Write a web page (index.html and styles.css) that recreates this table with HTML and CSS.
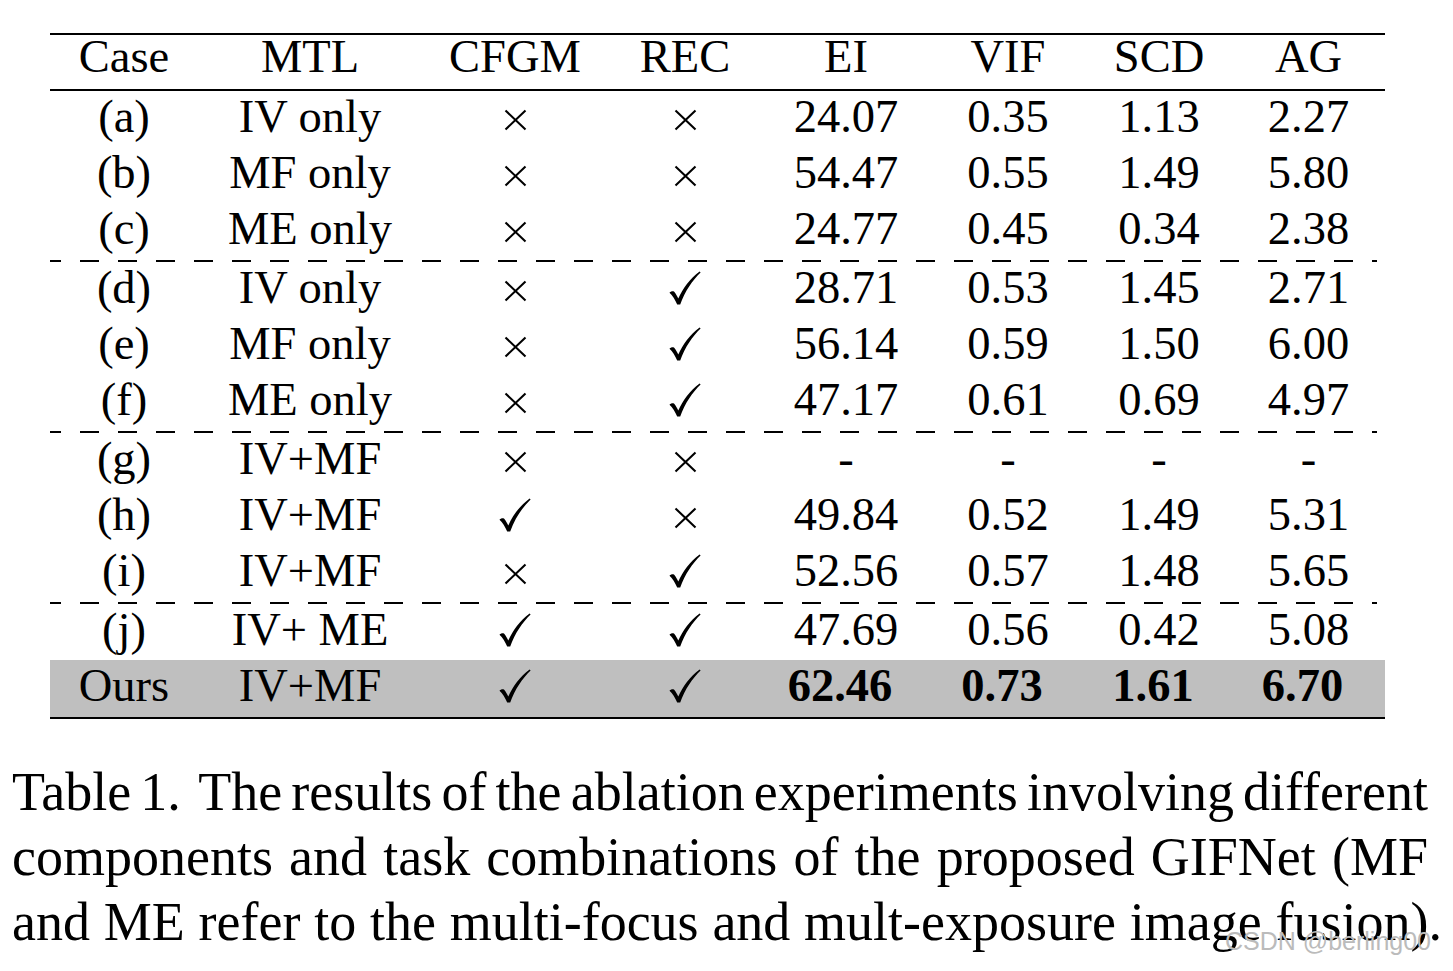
FILE: index.html
```html
<!DOCTYPE html>
<html>
<head>
<meta charset="utf-8">
<link rel="stylesheet" href="styles.css">
</head>
<body>
<div class="page">
  <div class="table">
    <div class="row head">
      <div class="cell">Case</div><div class="cell">MTL</div><div class="cell">CFGM</div><div class="cell">REC</div>
      <div class="cell">EI</div><div class="cell">VIF</div><div class="cell">SCD</div><div class="cell">AG</div>
    </div>

    <div class="row">
      <div class="cell">(a)</div><div class="cell">IV only</div>
      <div class="cell"><svg class="x" viewBox="0 0 23 22"><path d="M1.5 1.5L21.5 20.5M21.5 1.5L1.5 20.5"/></svg></div>
      <div class="cell"><svg class="x" viewBox="0 0 23 22"><path d="M1.5 1.5L21.5 20.5M21.5 1.5L1.5 20.5"/></svg></div>
      <div class="cell">24.07</div><div class="cell">0.35</div><div class="cell">1.13</div><div class="cell">2.27</div>
    </div>
    <div class="row">
      <div class="cell">(b)</div><div class="cell">MF only</div>
      <div class="cell"><svg class="x" viewBox="0 0 23 22"><path d="M1.5 1.5L21.5 20.5M21.5 1.5L1.5 20.5"/></svg></div>
      <div class="cell"><svg class="x" viewBox="0 0 23 22"><path d="M1.5 1.5L21.5 20.5M21.5 1.5L1.5 20.5"/></svg></div>
      <div class="cell">54.47</div><div class="cell">0.55</div><div class="cell">1.49</div><div class="cell">5.80</div>
    </div>
    <div class="row">
      <div class="cell">(c)</div><div class="cell">ME only</div>
      <div class="cell"><svg class="x" viewBox="0 0 23 22"><path d="M1.5 1.5L21.5 20.5M21.5 1.5L1.5 20.5"/></svg></div>
      <div class="cell"><svg class="x" viewBox="0 0 23 22"><path d="M1.5 1.5L21.5 20.5M21.5 1.5L1.5 20.5"/></svg></div>
      <div class="cell">24.77</div><div class="cell">0.45</div><div class="cell">0.34</div><div class="cell">2.38</div>
    </div>

    <div class="dash"></div>

    <div class="row">
      <div class="cell">(d)</div><div class="cell">IV only</div>
      <div class="cell"><svg class="x" viewBox="0 0 23 22"><path d="M1.5 1.5L21.5 20.5M21.5 1.5L1.5 20.5"/></svg></div>
      <div class="cell"><svg class="chk" viewBox="0 0 32 34"><path d="M0.5 21.8C1.8 20.4 3.8 19.8 5.2 20.8C6.5 22.4 8 25 9.3 27.5C14 17 21 7.5 30.6 0.4L31.6 1.4C23.5 9.2 16 20 11.2 33.6L8.2 33.6C6 28.5 3.5 24.5 0.5 21.8Z"/></svg></div>
      <div class="cell">28.71</div><div class="cell">0.53</div><div class="cell">1.45</div><div class="cell">2.71</div>
    </div>
    <div class="row">
      <div class="cell">(e)</div><div class="cell">MF only</div>
      <div class="cell"><svg class="x" viewBox="0 0 23 22"><path d="M1.5 1.5L21.5 20.5M21.5 1.5L1.5 20.5"/></svg></div>
      <div class="cell"><svg class="chk" viewBox="0 0 32 34"><path d="M0.5 21.8C1.8 20.4 3.8 19.8 5.2 20.8C6.5 22.4 8 25 9.3 27.5C14 17 21 7.5 30.6 0.4L31.6 1.4C23.5 9.2 16 20 11.2 33.6L8.2 33.6C6 28.5 3.5 24.5 0.5 21.8Z"/></svg></div>
      <div class="cell">56.14</div><div class="cell">0.59</div><div class="cell">1.50</div><div class="cell">6.00</div>
    </div>
    <div class="row">
      <div class="cell">(f)</div><div class="cell">ME only</div>
      <div class="cell"><svg class="x" viewBox="0 0 23 22"><path d="M1.5 1.5L21.5 20.5M21.5 1.5L1.5 20.5"/></svg></div>
      <div class="cell"><svg class="chk" viewBox="0 0 32 34"><path d="M0.5 21.8C1.8 20.4 3.8 19.8 5.2 20.8C6.5 22.4 8 25 9.3 27.5C14 17 21 7.5 30.6 0.4L31.6 1.4C23.5 9.2 16 20 11.2 33.6L8.2 33.6C6 28.5 3.5 24.5 0.5 21.8Z"/></svg></div>
      <div class="cell">47.17</div><div class="cell">0.61</div><div class="cell">0.69</div><div class="cell">4.97</div>
    </div>

    <div class="dash"></div>

    <div class="row">
      <div class="cell">(g)</div><div class="cell">IV+MF</div>
      <div class="cell"><svg class="x" viewBox="0 0 23 22"><path d="M1.5 1.5L21.5 20.5M21.5 1.5L1.5 20.5"/></svg></div>
      <div class="cell"><svg class="x" viewBox="0 0 23 22"><path d="M1.5 1.5L21.5 20.5M21.5 1.5L1.5 20.5"/></svg></div>
      <div class="cell">-</div><div class="cell">-</div><div class="cell">-</div><div class="cell">-</div>
    </div>
    <div class="row">
      <div class="cell">(h)</div><div class="cell">IV+MF</div>
      <div class="cell"><svg class="chk" viewBox="0 0 32 34"><path d="M0.5 21.8C1.8 20.4 3.8 19.8 5.2 20.8C6.5 22.4 8 25 9.3 27.5C14 17 21 7.5 30.6 0.4L31.6 1.4C23.5 9.2 16 20 11.2 33.6L8.2 33.6C6 28.5 3.5 24.5 0.5 21.8Z"/></svg></div>
      <div class="cell"><svg class="x" viewBox="0 0 23 22"><path d="M1.5 1.5L21.5 20.5M21.5 1.5L1.5 20.5"/></svg></div>
      <div class="cell">49.84</div><div class="cell">0.52</div><div class="cell">1.49</div><div class="cell">5.31</div>
    </div>
    <div class="row">
      <div class="cell">(i)</div><div class="cell">IV+MF</div>
      <div class="cell"><svg class="x" viewBox="0 0 23 22"><path d="M1.5 1.5L21.5 20.5M21.5 1.5L1.5 20.5"/></svg></div>
      <div class="cell"><svg class="chk" viewBox="0 0 32 34"><path d="M0.5 21.8C1.8 20.4 3.8 19.8 5.2 20.8C6.5 22.4 8 25 9.3 27.5C14 17 21 7.5 30.6 0.4L31.6 1.4C23.5 9.2 16 20 11.2 33.6L8.2 33.6C6 28.5 3.5 24.5 0.5 21.8Z"/></svg></div>
      <div class="cell">52.56</div><div class="cell">0.57</div><div class="cell">1.48</div><div class="cell">5.65</div>
    </div>

    <div class="dash"></div>

    <div class="row">
      <div class="cell">(j)</div><div class="cell">IV+ ME</div>
      <div class="cell"><svg class="chk" viewBox="0 0 32 34"><path d="M0.5 21.8C1.8 20.4 3.8 19.8 5.2 20.8C6.5 22.4 8 25 9.3 27.5C14 17 21 7.5 30.6 0.4L31.6 1.4C23.5 9.2 16 20 11.2 33.6L8.2 33.6C6 28.5 3.5 24.5 0.5 21.8Z"/></svg></div>
      <div class="cell"><svg class="chk" viewBox="0 0 32 34"><path d="M0.5 21.8C1.8 20.4 3.8 19.8 5.2 20.8C6.5 22.4 8 25 9.3 27.5C14 17 21 7.5 30.6 0.4L31.6 1.4C23.5 9.2 16 20 11.2 33.6L8.2 33.6C6 28.5 3.5 24.5 0.5 21.8Z"/></svg></div>
      <div class="cell">47.69</div><div class="cell">0.56</div><div class="cell">0.42</div><div class="cell">5.08</div>
    </div>
    <div class="row ours">
      <div class="cell">Ours</div><div class="cell">IV+MF</div>
      <div class="cell"><svg class="chk" viewBox="0 0 32 34"><path d="M0.5 21.8C1.8 20.4 3.8 19.8 5.2 20.8C6.5 22.4 8 25 9.3 27.5C14 17 21 7.5 30.6 0.4L31.6 1.4C23.5 9.2 16 20 11.2 33.6L8.2 33.6C6 28.5 3.5 24.5 0.5 21.8Z"/></svg></div>
      <div class="cell"><svg class="chk" viewBox="0 0 32 34"><path d="M0.5 21.8C1.8 20.4 3.8 19.8 5.2 20.8C6.5 22.4 8 25 9.3 27.5C14 17 21 7.5 30.6 0.4L31.6 1.4C23.5 9.2 16 20 11.2 33.6L8.2 33.6C6 28.5 3.5 24.5 0.5 21.8Z"/></svg></div>
      <div class="cell best">62.46</div><div class="cell best">0.73</div><div class="cell best">1.61</div><div class="cell best">6.70</div>
    </div>
  </div>

  <div class="caption">
    <span class="line l1">Table 1.&nbsp; The results of the ablation experiments involving different</span>
    <span class="line l2">components and task combinations of the proposed GIFNet (MF</span>
    <span class="line l3">and ME refer to the multi-focus and mult-exposure image fusion).</span>
  </div>

  <div class="watermark">CSDN @berling00</div>
</div>
</body>
</html>
```

FILE: styles.css
```css
html, body {
  margin: 0;
  padding: 0;
  background: #ffffff;
}

.page {
  position: relative;
  width: 1453px;
  height: 971px;
  overflow: hidden;
  padding: 33px 0 0 12px;
  box-sizing: border-box;
  font-family: "Liberation Serif", "Times New Roman", serif;
  color: #000;
}

.table {
  margin-left: 38px;
  width: 1335px;
  border-top: 2px solid #000;
  border-bottom: 2px solid #000;
}

.row {
  display: grid;
  grid-template-columns: 148px 224px 186px 154px 168px 156px 146px 153px;
  height: 56px;
  font-size: 46.5px;
}

.row.head {
  height: 54px;
  border-bottom: 2px solid #000;
}

.cell {
  text-align: center;
  line-height: 52px;
  white-space: nowrap;
}

.head .cell {
  line-height: 44px;
}

.ours {
  height: 57px;
  background: #bfbfbf;
}

.best {
  font-weight: bold;
  padding-right: 12px;
}

.dash {
  height: 3px;
  background-image: repeating-linear-gradient(to right, #000 0 19px, transparent 19px 38px);
  background-size: 100% 2px;
  background-position: -8px 1px;
  background-repeat: no-repeat;
}

.x {
  width: 23px;
  height: 22px;
  vertical-align: 1px;
}

.x path {
  stroke: #000;
  stroke-width: 2.1;
  fill: none;
}

.chk {
  width: 32px;
  height: 34px;
  vertical-align: -2px;
}

.chk path {
  fill: #000;
}

.caption {
  margin-top: 41px;
  width: 1416px;
  font-size: 54px;
  line-height: 65px;
}

.line {
  display: block;
  text-align: justify;
  text-align-last: justify;
}

.l1 {
  word-spacing: -4.5px;
}

.l3 {
  margin-right: -14px;
}

.watermark {
  position: absolute;
  left: 1225px;
  top: 929px;
  font-family: "Liberation Sans", Arial, sans-serif;
  font-size: 25px;
  line-height: 25px;
  color: #bbbbbb;
  white-space: nowrap;
}
```
